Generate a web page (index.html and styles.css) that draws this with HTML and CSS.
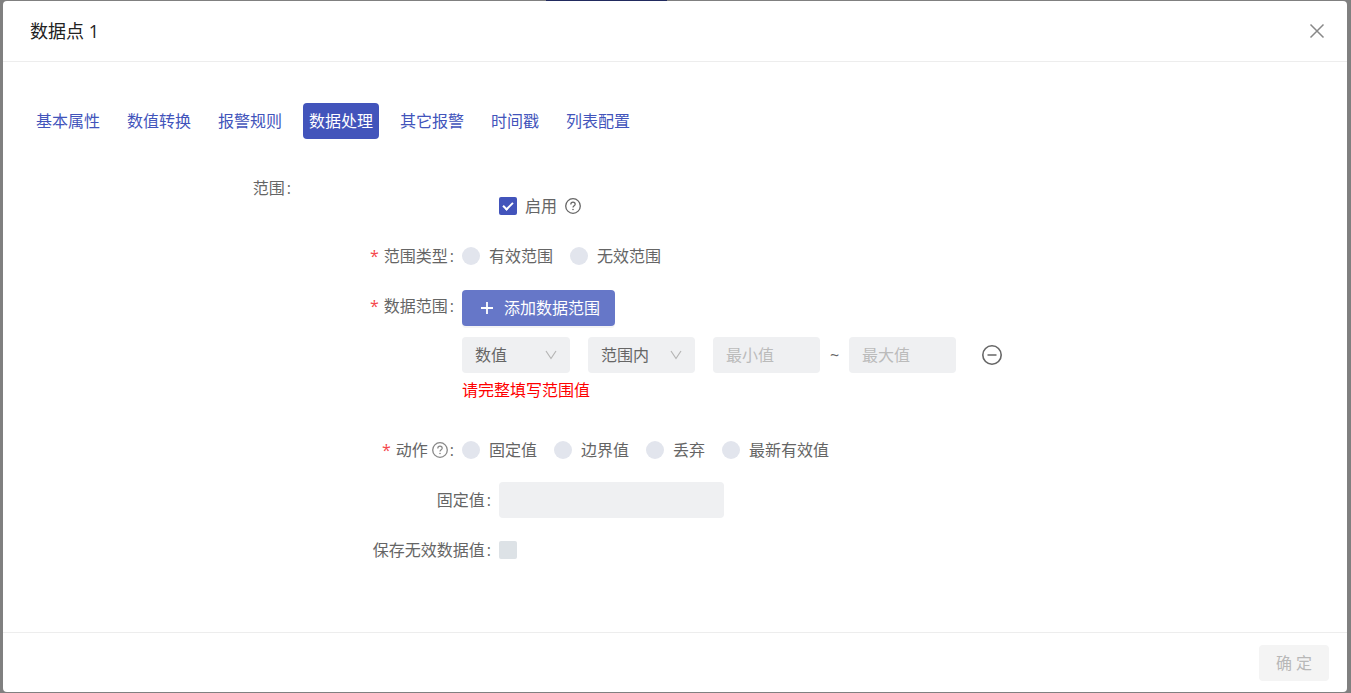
FILE: index.html
```html
<!DOCTYPE html>
<html lang="zh-CN">
<head>
<meta charset="utf-8">
<meta name="viewport" content="width=device-width, initial-scale=1">
<title>数据点 1</title>
<link rel="stylesheet" href="styles.css">
</head>
<body>
<div class="page-strip"></div>
<main class="dialog" role="dialog" aria-labelledby="dialog-title">
  <header class="dialog-header">
    <h1 class="dialog-title" id="dialog-title">数据点 1</h1>
    <button class="icon-button close" type="button" aria-label="关闭">
      <svg width="16" height="16" viewBox="0 0 16 16"><path d="M1.5 1.5l13 13M14.5 1.5l-13 13" fill="none" stroke="currentColor" stroke-width="1.5"/></svg>
    </button>
  </header>

  <div class="dialog-body">
    <nav class="tabs">
      <a class="tab" href="#basic">基本属性</a>
      <a class="tab" href="#convert">数值转换</a>
      <a class="tab" href="#rules">报警规则</a>
      <a class="tab tab-active" href="#process">数据处理</a>
      <a class="tab" href="#other">其它报警</a>
      <a class="tab" href="#time">时间戳</a>
      <a class="tab" href="#list">列表配置</a>
    </nav>

    <form class="form">
      <div class="row row-range">
        <label class="label label-outer" for="enable">范围<span class="colon">:</span></label>
        <div class="enable">
          <input class="check" type="checkbox" id="enable" checked>
          <label for="enable">启用</label>
          <svg class="help" width="16" height="16" viewBox="0 0 16 16"><circle cx="8" cy="8" r="7.3" fill="none" stroke="currentColor" stroke-width="1.3"/><path d="M5.8 6.4C5.8 5 6.8 4.2 8 4.2s2.2.8 2.2 2.1C10.2 7.8 8 7.9 8 9.6" fill="none" stroke="currentColor" stroke-width="1.2"/><circle cx="8" cy="11.5" r=".8" fill="currentColor"/></svg>
        </div>
      </div>

      <div class="row" role="radiogroup" aria-labelledby="type-label">
        <span class="label" id="type-label"><span class="star">*</span>范围类型<span class="colon">:</span></span>
        <div class="radios">
          <label class="option"><input class="radio" type="radio" name="type" disabled>有效范围</label>
          <label class="option"><input class="radio" type="radio" name="type" disabled>无效范围</label>
        </div>
      </div>

      <div class="row row-data">
        <span class="label"><span class="star">*</span>数据范围<span class="colon">:</span></span>
        <div class="data">
          <button class="add" type="button" disabled>
            <svg width="14" height="14" viewBox="0 0 14 14"><path d="M7 1v12M1 7h12" fill="none" stroke="currentColor" stroke-width="1.8"/></svg>
            添加数据范围
          </button>
          <div class="range-line">
            <span class="select-box">
              <select class="field field-type" aria-label="数据类型" disabled><option>数值</option></select>
              <svg class="chevron" width="12" height="10" viewBox="0 0 12 10"><path d="M1 1l5 7.5L11 1" fill="none" stroke="currentColor" stroke-width="1.2"/></svg>
            </span>
            <span class="select-box">
              <select class="field" aria-label="范围方式" disabled><option>范围内</option></select>
              <svg class="chevron" width="12" height="10" viewBox="0 0 12 10"><path d="M1 1l5 7.5L11 1" fill="none" stroke="currentColor" stroke-width="1.2"/></svg>
            </span>
            <span class="min-max">
              <input class="field" type="text" placeholder="最小值" aria-label="最小值" disabled>
              <span class="tilde">~</span>
              <input class="field" type="text" placeholder="最大值" aria-label="最大值" disabled>
            </span>
            <button class="icon-button remove" type="button" aria-label="删除范围">
              <svg width="20" height="20" viewBox="0 0 20 20"><circle cx="10" cy="10" r="9.2" fill="none" stroke="currentColor" stroke-width="1.6"/><path d="M5.5 10h9" stroke="currentColor" stroke-width="1.5"/></svg>
            </button>
          </div>
          <p class="error" role="alert">请完整填写范围值</p>
        </div>
      </div>

      <div class="row" role="radiogroup" aria-labelledby="action-label">
        <span class="label" id="action-label"><span class="star">*</span>动作<svg class="help help-label" width="16" height="16" viewBox="0 0 16 16"><circle cx="8" cy="8" r="7.3" fill="none" stroke="currentColor" stroke-width="1.3"/><path d="M5.8 6.4C5.8 5 6.8 4.2 8 4.2s2.2.8 2.2 2.1C10.2 7.8 8 7.9 8 9.6" fill="none" stroke="currentColor" stroke-width="1.2"/><circle cx="8" cy="11.5" r=".8" fill="currentColor"/></svg><span class="colon">:</span></span>
        <div class="radios">
          <label class="option"><input class="radio" type="radio" name="action" disabled>固定值</label>
          <label class="option"><input class="radio" type="radio" name="action" disabled>边界值</label>
          <label class="option"><input class="radio" type="radio" name="action" disabled>丢弃</label>
          <label class="option"><input class="radio" type="radio" name="action" disabled>最新有效值</label>
        </div>
      </div>

      <div class="row">
        <label class="label label-inner" for="fixed">固定值<span class="colon">:</span></label>
        <input class="field field-fixed" type="text" id="fixed" disabled>
      </div>

      <div class="row">
        <label class="label label-inner" for="save">保存无效数据值<span class="colon">:</span></label>
        <input class="check" type="checkbox" id="save" disabled>
      </div>
    </form>
  </div>

  <footer class="dialog-footer">
    <button class="confirm" type="button" disabled>确 定</button>
  </footer>
</main>
</body>
</html>
```

FILE: styles.css
```css
* {
  box-sizing: border-box;
}

body {
  margin: 0;
  padding: 1px 4px 1px 3px;
  min-height: 100vh;
  display: flex;
  background: #808080;
  color: #656565;
  font: 16px/36px "Open Sans", "Noto Sans CJK SC", sans-serif;
}

button,
input,
select {
  font: inherit;
  margin: 0;
  border: 0;
}

.page-strip {
  position: absolute;
  top: 0;
  left: 546px;
  width: 121px;
  height: 1px;
  background: #212a5e;
}

.dialog {
  flex: 1;
  display: flex;
  flex-direction: column;
  background: #fff;
  border-radius: 4px;
}

.dialog-header {
  display: flex;
  align-items: center;
  justify-content: space-between;
  padding: 12px 22px 12px 27px;
  border-bottom: 1px solid #ededed;
}

.dialog-title {
  margin: 0;
  font-size: 18px;
  font-weight: 400;
  color: #222;
}

.icon-button {
  display: flex;
  padding: 0;
  background: none;
}

.close {
  color: #888;
}

.dialog-body {
  flex: 1;
  padding: 41px 27px 24px;
}

.tabs {
  display: flex;
  gap: 15px;
}

.tab {
  padding: 0 6px;
  border-radius: 4px;
  color: #4254bb;
  text-decoration: none;
}

.tab-active {
  background: #4254bb;
  color: #fff;
}

.form {
  display: flex;
  flex-direction: column;
  gap: 14px;
  padding-top: 31px;
}

.row {
  display: flex;
  align-items: center;
}

.row-range,
.row-data {
  align-items: flex-start;
}

.row-data {
  margin-bottom: 11px;
}

.label {
  display: flex;
  align-items: center;
  justify-content: flex-end;
  flex: none;
  width: 432px;
  padding-right: 8px;
}

.label-outer {
  width: 269px;
}

.label-inner {
  width: 469px;
}

.colon {
  padding-left: 2px;
}

.star {
  margin-right: 5px;
  color: #f5474b;
}

.enable {
  display: flex;
  align-items: center;
  gap: 8px;
  padding: 18px 0 0 200px;
}

.help {
  color: #666;
}

.help-label {
  margin-left: 4px;
  color: #888;
}

.check,
.radio {
  appearance: none;
  flex: none;
  width: 18px;
  height: 18px;
}

.check {
  border-radius: 2px;
  background: #dde2e6;
}

.check:checked {
  display: grid;
  place-items: center;
  background: #4254bb;
}

.check:checked::before {
  content: "";
  width: 8px;
  height: 4px;
  margin-bottom: 3px;
  border: solid #fff;
  border-width: 0 0 2px 2px;
  transform: rotate(-45deg);
}

.radio {
  border-radius: 50%;
  background: #e2e5ed;
}

.radios {
  display: flex;
  gap: 17px;
}

.option {
  display: flex;
  align-items: center;
  gap: 9px;
}

.data {
  padding-top: 2px;
}

.add {
  display: flex;
  align-items: center;
  gap: 10px;
  height: 36px;
  padding: 0 15px 0 18px;
  border-radius: 4px;
  background: #6677c8;
  box-shadow: 0 2px 0 #f4f4f5;
  color: #fff;
}

.range-line {
  display: flex;
  align-items: center;
  gap: 18px;
  margin-top: 11px;
}

.select-box {
  position: relative;
  display: flex;
}

.field {
  appearance: none;
  width: 107px;
  height: 36px;
  padding: 0 13px;
  border-radius: 4px;
  background: #eff0f2;
  color: #666;
  opacity: 1;
}

.field::placeholder {
  color: #bbb;
}

.field-type {
  width: 108px;
}

.field-fixed {
  width: 225px;
}

.chevron {
  position: absolute;
  top: 13px;
  right: 13px;
  color: #b5b5b5;
  pointer-events: none;
}

.min-max {
  display: flex;
}

.tilde {
  width: 29px;
  text-align: center;
}

.remove {
  margin-left: 8px;
  color: #666;
}

.error {
  margin: 0;
  line-height: 34px;
  color: #f00;
}

.dialog-footer {
  display: flex;
  justify-content: flex-end;
  padding: 12px 18px 11px;
  border-top: 1px solid #ededed;
}

.confirm {
  width: 70px;
  height: 36px;
  padding: 0;
  border-radius: 4px;
  background: #f4f4f4;
  color: #b8b8b8;
}
```
